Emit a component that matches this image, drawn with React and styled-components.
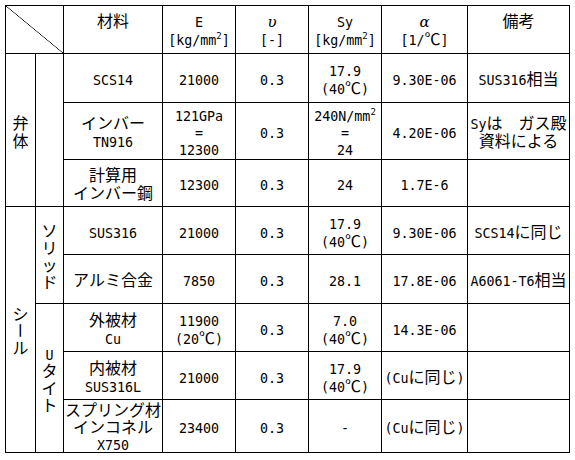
import React from "react";
import styled, { createGlobalStyle } from "styled-components";

const GlobalStyle = createGlobalStyle`
  html, body {
    margin: 0;
    padding: 0;
    background: #ffffff;
  }
  body {
    font-family: "Noto Sans CJK JP", sans-serif;
    color: #000000;
  }
`;

const Sheet = styled.div`
  padding: 5px 0 0 5px;
`;

const Grid = styled.div`
  display: grid;
  grid-template-columns: 30px 28px 99px 73px 73px 73px 86px 102px;
  grid-template-rows: 48px 49px 57px 47px 48px 49px 48px 48px 53px;
  width: max-content;
  border-left: 1px solid #000;
  border-top: 1px solid #000;
  font-size: 16px;
  line-height: 18px;
`;

const Cell = styled.div`
  border-right: 1px solid #000;
  border-bottom: 1px solid #000;
  display: flex;
  align-items: center;
  justify-content: center;
  grid-column: ${(p) => p.$col || "auto"};
  grid-row: ${(p) => p.$row || "auto"};
`;

const HeadCell = styled(Cell)`
  align-items: flex-start;
  padding-top: 5px;
`;

const LabelCell = styled(Cell)`
  padding-top: 2px;
`;

const CornerCell = styled(Cell)`
  background: linear-gradient(
    to top right,
    transparent calc(50% - 0.6px),
    #000 50%,
    transparent calc(50% + 0.6px)
  );
`;

const Text = styled.span`
  display: block;
  text-align: center;
  white-space: pre;
  line-height: ${(p) => (p.$tight ? 17 : 18)}px;
`;

// half-width characters: 8px advance, like the sheet's gothic font
const Latin = styled.span`
  font-family: "DejaVu Sans Mono", "Liberation Mono", monospace;
  font-size: 13.33px;
  line-height: 0;
`;

const Greek = styled.span`
  font-style: italic;
  font-family: "DejaVu Serif", serif;
  font-size: 15px;
  line-height: 0;
`;

const Sup = styled.sup`
  font-family: "DejaVu Sans Mono", monospace;
  font-size: 9px;
  line-height: 0;
  vertical-align: 6px;
`;

// stacked label, one character per line
const Stack = styled.span`
  display: flex;
  flex-direction: column;
  align-items: center;
  line-height: ${(p) => p.$pitch || 17}px;
`;

const Turned = styled.span`
  display: inline-block;
  transform: rotate(90deg);
`;

const RUNS = /[\x20-\x7e]+|[\u03b1-\u03c9]+|[^\x20-\x7e\u03b1-\u03c9]+/g;

const renderRun = (run, key) => {
  if (/^[\x20-\x7e]/.test(run)) return <Latin key={key}>{run}</Latin>;
  if (/^[\u03b1-\u03c9]/.test(run)) return <Greek key={key}>{run}</Greek>;
  return <React.Fragment key={key}>{run}</React.Fragment>;
};

// "^2" marks a superscript two
const rich = (s) =>
  s.split("^2").map((part, i) => (
    <React.Fragment key={i}>
      {i > 0 && <Sup>2</Sup>}
      {(part.match(RUNS) || []).map((run, j) => renderRun(run, j))}
    </React.Fragment>
  ));

const VerticalLabel = ({ text, pitch }) => (
  <Stack $pitch={pitch}>
    {[...text].map((c, i) => (
      <span key={i}>{c === "ー" ? <Turned>ー</Turned> : rich(c)}</span>
    ))}
  </Stack>
);

const headers = ["材料", "E\n[kg/mm^2]", "υ\n[-]", "Sy\n[kg/mm^2]", "α\n[1/℃]", "備考"];

const rows = [
  ["SCS14", "21000", "0.3", "17.9\n(40℃)", "9.30E-06", "SUS316相当"],
  ["インバー\nTN916", "121GPa\n=\n12300", "0.3", "240N/mm^2\n=\n24", "4.20E-06", "Syは　ガス殿\n資料による"],
  ["計算用\nインバー鋼", "12300", "0.3", "24", "1.7E-6", ""],
  ["SUS316", "21000", "0.3", "17.9\n(40℃)", "9.30E-06", "SCS14に同じ"],
  ["アルミ合金", "7850", "0.3", "28.1", "17.8E-06", "A6061-T6相当"],
  ["外被材\nCu", "11900\n(20℃)", "0.3", "7.0\n(40℃)", "14.3E-06", ""],
  ["内被材\nSUS316L", "21000", "0.3", "17.9\n(40℃)", "(Cuに同じ)", ""],
  ["スプリング材\nインコネル\nX750", "23400", "0.3", "-", "(Cuに同じ)", ""],
];

const lineCount = (s) => s.split("\n").length;

export default function App() {
  return (
    <Sheet>
      <GlobalStyle />
      <Grid>
        <CornerCell $col="1 / 3" $row="1" />
        {headers.map((h, i) => (
          <HeadCell key={"h" + i} $col={i + 3} $row="1">
            <Text>{rich(h)}</Text>
          </HeadCell>
        ))}

        {/* group labels down the left side */}
        <LabelCell $col="1" $row="2 / 5">
          <VerticalLabel text="弁体" pitch={18} />
        </LabelCell>
        <LabelCell $col="2" $row="2 / 5" />
        <LabelCell $col="1" $row="5 / 10">
          <VerticalLabel text="シール" />
        </LabelCell>
        <LabelCell $col="2" $row="5 / 7">
          <VerticalLabel text="ソリッド" />
        </LabelCell>
        <LabelCell $col="2" $row="7 / 10">
          <VerticalLabel text="Uタイト" />
        </LabelCell>

        {rows.map((r, ri) =>
          r.map((v, ci) => (
            <Cell key={ri + "-" + ci} $col={ci + 3} $row={ri + 2}>
              <Text $tight={lineCount(v) > 2}>{rich(v)}</Text>
            </Cell>
          ))
        )}
      </Grid>
    </Sheet>
  );
}
